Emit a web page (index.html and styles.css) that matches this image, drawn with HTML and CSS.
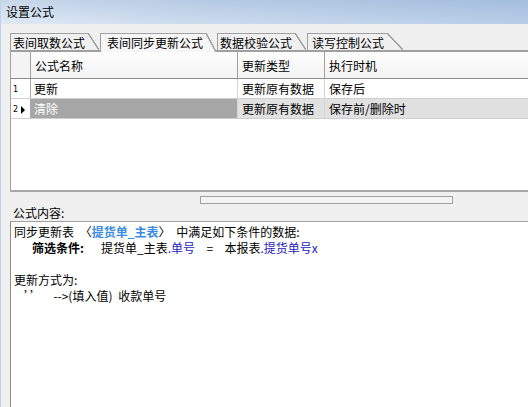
FILE: index.html
```html
<!DOCTYPE html>
<html lang="zh-CN">
<head>
    <meta charset="UTF-8">
    <title>设置公式</title>
    <link rel="stylesheet" href="styles.css">
</head>
<body>
    <div class="window">
        <!-- Title bar -->
        <div class="titlebar">设置公式</div>

        <div class="client">
            <!-- Tabs -->
            <div class="tabs">
                <div class="tab"><span class="tab-label">表间取数公式</span><span class="tab-slant"></span></div>
                <div class="tab active"><span class="tab-label">表间同步更新公式</span><span class="tab-slant"></span></div>
                <div class="tab"><span class="tab-label">数据校验公式</span><span class="tab-slant"></span></div>
                <div class="tab"><span class="tab-label">读写控制公式</span><span class="tab-slant"></span></div>
            </div>

            <!-- Formula grid -->
            <div class="grid">
                <table>
                    <thead>
                        <tr>
                            <th class="rowhead"></th>
                            <th class="col-name">公式名称</th>
                            <th class="col-type">更新类型</th>
                            <th class="col-time">执行时机</th>
                        </tr>
                    </thead>
                    <tbody>
                        <tr>
                            <td class="rowhead"><span class="rownum">1</span></td>
                            <td>更新</td>
                            <td>更新原有数据</td>
                            <td>保存后</td>
                        </tr>
                        <tr class="selected">
                            <td class="rowhead"><span class="rownum">2</span><span class="pointer"></span></td>
                            <td class="current">清除</td>
                            <td>更新原有数据</td>
                            <td>保存前/删除时</td>
                        </tr>
                    </tbody>
                </table>
            </div>

            <div class="hscroll"><div class="thumb"></div></div>

            <div class="label">公式内容:</div>

            <!-- Formula description -->
            <div class="content">
                <div class="line">同步更新表 〈<b class="tbl">提货单_主表</b>〉 中满足如下条件的数据:</div>
                <div class="line indent"><b>筛选条件:</b>&nbsp;&nbsp; 提货单_主表<span class="field">.单号</span> &nbsp;= &nbsp;本报表<span class="field">.提货单号x</span></div>
                <div class="line">&nbsp;</div>
                <div class="line">更新方式为:</div>
                <div class="line small-indent">’’&nbsp; --&gt;(填入值) 收款单号</div>
            </div>
        </div>
    </div>
</body>
</html>
```

FILE: styles.css
```css
body {
    margin: 0;
    background-color: #f0f0f0;
    font-family: "Noto Sans CJK SC", "DejaVu Sans", sans-serif;
    font-size: 12px;
    color: #000;
    overflow: hidden;
}

.window {
    width: 527px;
    height: 407px;
    border-left: 1px solid #bcd2ea;
    overflow: hidden;
}

/* Title bar */
.titlebar {
    height: 24px;
    line-height: 24px;
    padding-left: 5px;
    background:
        linear-gradient(to bottom, rgba(110, 145, 190, 0.18), rgba(255, 255, 255, 0.12)),
        linear-gradient(to right, #dce7f3 0%, #c6d8ec 35%, #aec7e4 100%);
}

.client {
    padding: 9px 0 0 9px;
}

/* Tabs */
.tabs {
    display: flex;
    height: 17px;
    border-bottom: 2px solid #a0a0a0;
}

.tab {
    display: flex;
    height: 17px;
    margin-right: 1px;
}

.tab-label {
    line-height: 17px;
    padding: 0 3px 0 2px;
    border-top: 1px solid #a0a0a0;
    border-left: 1px solid #a0a0a0;
    background-color: #f0f0f0;
}

.tab-slant {
    width: 11px;
    background: linear-gradient(to top right, #f0f0f0 calc(50% - 1px), #a0a0a0 calc(50% - 0.5px), #a0a0a0 calc(50% + 0.5px), transparent calc(50% + 1px));
}

.tab.active {
    height: 19px;
    margin-bottom: -2px;
}

.tab.active .tab-label {
    padding-left: 6px;
    background-color: #f6f6f6;
}

.tab.active .tab-slant {
    width: 10px;
    background: linear-gradient(to top right, #f6f6f6 calc(50% - 1px), #a0a0a0 calc(50% - 0.5px), #a0a0a0 calc(50% + 0.5px), transparent calc(50% + 1px));
}

.tab:nth-child(4) .tab-label {
    padding-left: 4px;
}

.tab:nth-child(4) .tab-slant {
    width: 16px;
}

/* Grid */
.grid {
    height: 138px;
    background-color: #fff;
    border-left: 1px solid #a0a0a0;
    border-bottom: 2px solid #a8a8a8;
}

.grid table {
    border-collapse: collapse;
    table-layout: fixed;
    width: 560px;
}

.grid th {
    height: 26px;
    padding: 0 0 0 4px;
    text-align: left;
    font-weight: normal;
    background: linear-gradient(#fdfdfd, #f3f3f3);
    border-right: 1px solid #a0a0a0;
    border-bottom: 1px solid #8c8c8c;
}

.grid td {
    height: 17px;
    line-height: 17px;
    padding: 0 0 0 4px;
    white-space: nowrap;
    border-right: 1px solid #d4d4d4;
    border-bottom: 1px solid #cfcfcf;
}

.grid .rowhead {
    width: 17px;
    padding-left: 2px;
}

.grid th.rowhead {
    background: #f4f4f4;
}

.grid td.rowhead {
    border-right: 1px solid #a8a8a8;
}

.grid td.rowhead + td {
    padding-left: 3px;
}

.col-name {
    width: 202px;
}

.col-type {
    width: 82px;
}

.rownum {
    font-family: "DejaVu Sans", sans-serif;
    font-size: 8px;
    vertical-align: middle;
}

.pointer {
    display: inline-block;
    margin-left: 3px;
    vertical-align: middle;
    border-top: 4px solid transparent;
    border-bottom: 4px solid transparent;
    border-left: 4px solid #000;
}

.selected td {
    background-color: #e1e1e1;
}

.selected td.rowhead {
    background-color: #fff;
}

.selected td.current {
    background-color: #a6a6a6;
    color: #fff;
}

/* Horizontal scroller under the grid */
.hscroll {
    height: 13px;
    padding: 4px 0 0 190px;
    box-sizing: border-box;
}

.thumb {
    width: 251px;
    height: 6px;
    border: 1px solid #a0a0a0;
    background-color: #f3f3f3;
}

.label {
    height: 16px;
    line-height: 16px;
    padding-left: 3px;
}

/* Formula text box */
.content {
    height: 200px;
    padding: 2px 0 0 3px;
    background-color: #fff;
    border-top: 1px solid #a0a0a0;
    border-left: 1px solid #8c8c8c;
}

.line {
    height: 16px;
    line-height: 16px;
    white-space: nowrap;
    word-spacing: 3px;
}

.indent {
    padding-left: 18px;
}

.small-indent {
    padding-left: 10px;
}

.tbl {
    color: #3a8de0;
}

.field {
    color: #2323c0;
}
```
